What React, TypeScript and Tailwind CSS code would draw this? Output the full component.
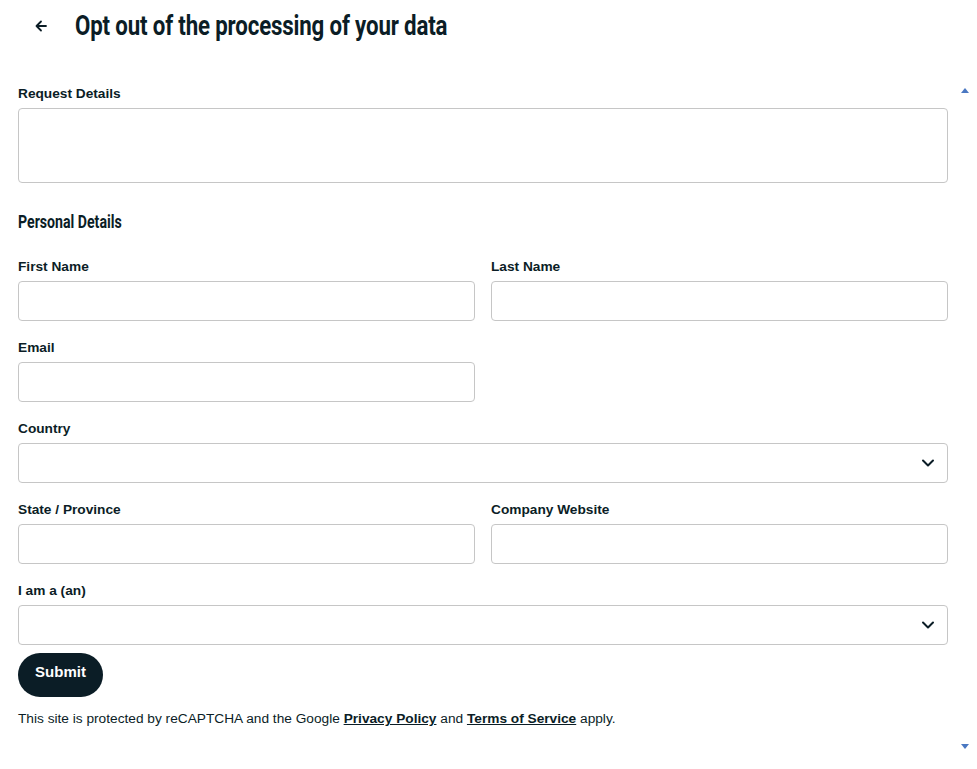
import React from "react";

const labelCls =
  "block text-[13.7px] leading-[18px] font-bold text-[#0b1d26] mb-[5px]";
const inputCls =
  "block w-full h-[40px] rounded-[4px] border border-[#c6c6c6] bg-white px-3 text-[14px] outline-none";

const Field = ({ label, className }: { label: string; className?: string }) => (
  <div className={className}>
    <label className={labelCls}>{label}</label>
    <input type="text" className={inputCls} />
  </div>
);

const SelectField = ({ label }: { label: string }) => (
  <div>
    <label className={labelCls}>{label}</label>
    <div className="relative">
      <select className={inputCls + " appearance-none"} defaultValue="">
        <option value=""></option>
      </select>
      <svg
        className="pointer-events-none absolute right-[13px] top-[14px]"
        width="14"
        height="12"
        viewBox="0 0 14 12"
        fill="none">
        <path
          d="M2 3.5 7 8.5 12 3.5"
          stroke="#0b1d26"
          strokeWidth="2"
          strokeLinecap="round"
          strokeLinejoin="round"
        />
      </svg>
    </div>
  </div>
);

export default function App() {
  return (
    <div
      className="relative w-[977px] h-[769px] bg-white text-[#0b1d26] overflow-hidden"
      style={{ fontFamily: '"Liberation Sans", Arial, sans-serif' }}>
      {/* header */}
      <div className="flex items-center h-[52px] pl-[34px]">
        <svg width="14" height="14" viewBox="0 0 14 14" fill="none">
          <path
            d="M12 7H2.5M7 2.5 2.5 7 7 11.5"
            stroke="#0b1d26"
            strokeWidth="1.8"
            strokeLinecap="round"
            strokeLinejoin="round"
          />
        </svg>
        <h1
          className="ml-[27px] origin-left scale-x-[0.795] whitespace-nowrap text-[28px] leading-[32px] font-bold tracking-[-0.2px]"
          style={{ fontFamily: "Roboto, sans-serif" }}>
          Opt out of the processing of your data
        </h1>
      </div>

      {/* scroll arrows */}
      <div className="absolute left-[961px] top-[88px] h-0 w-0 border-x-[4px] border-b-[5px] border-x-transparent border-b-[#4a78c2]" />
      <div className="absolute left-[961px] top-[744px] h-0 w-0 border-x-[4px] border-t-[5px] border-x-transparent border-t-[#4a78c2]" />

      <form className="px-[18px] pt-[33px] w-[966px]">
        <label className={labelCls}>Request Details</label>
        <textarea className="block w-full h-[75px] rounded-[4px] border border-[#c6c6c6] resize-none outline-none" />

        <h2
          className="mt-[28px] origin-left scale-x-[0.785] whitespace-nowrap text-[18px] leading-[22px] font-bold"
          style={{ fontFamily: "Roboto, sans-serif" }}>
          Personal Details
        </h2>

        <div className="mt-[25px] flex flex-col gap-[18px]">
          <div className="grid grid-cols-2 gap-x-[16px]">
            <Field label="First Name" />
            <Field label="Last Name" />
          </div>
          <div className="grid grid-cols-2 gap-x-[16px]">
            <Field label="Email" />
          </div>
          <SelectField label="Country" />
          <div className="grid grid-cols-2 gap-x-[16px]">
            <Field label="State / Province" />
            <Field label="Company Website" />
          </div>
          <SelectField label="I am a (an)" />
        </div>

        <button
          type="button"
          className="mt-[8px] h-[44px] w-[85px] rounded-[22px] bg-[#0b1d26] text-white text-[15px] font-bold pb-[5px]">
          Submit
        </button>

        <p className="mt-[14px] text-[13.7px] leading-[16px]">
          This site is protected by reCAPTCHA and the Google{" "}
          <a className="font-bold underline">Privacy Policy</a> and{" "}
          <a className="font-bold underline">Terms of Service</a> apply.
        </p>
      </form>
    </div>
  );
}
